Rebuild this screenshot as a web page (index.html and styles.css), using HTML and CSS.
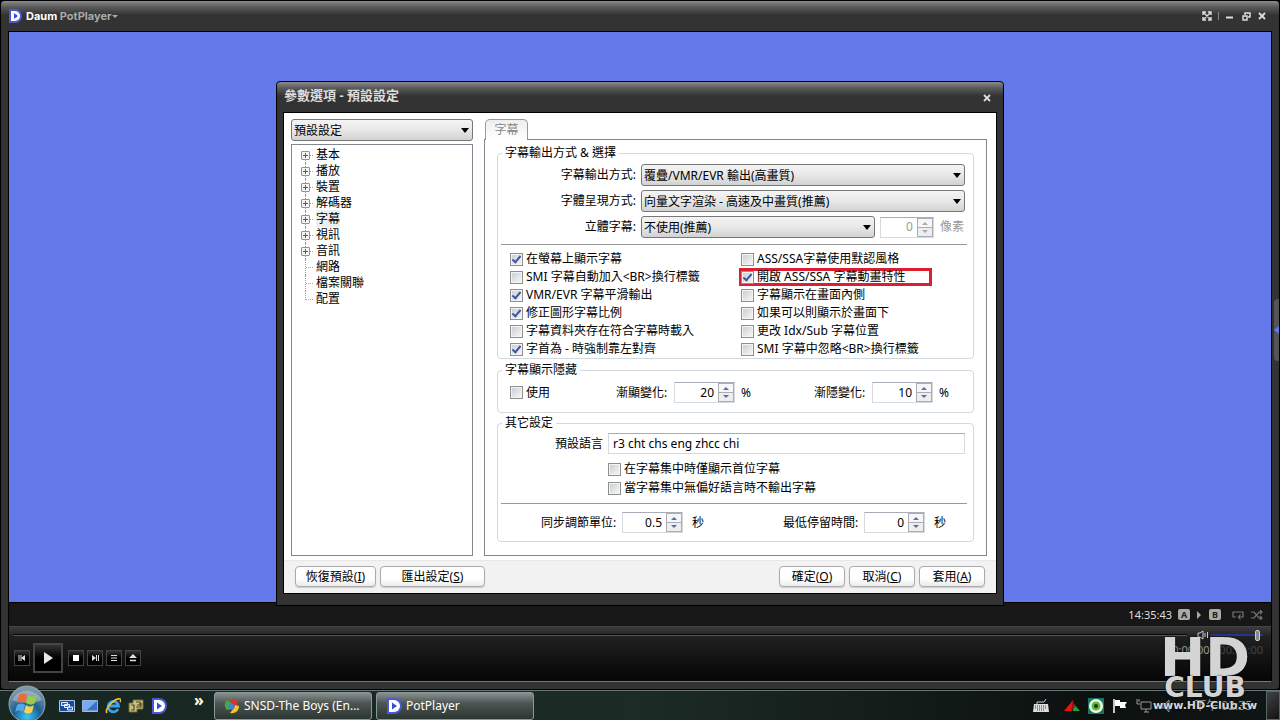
FILE: index.html
```
<!DOCTYPE html>
<html lang="zh-Hant">
<head>
    <meta charset="UTF-8">
    <meta name="viewport" content="width=device-width, initial-scale=1.0">
    <title>Daum PotPlayer</title>
    <link rel="stylesheet" href="styles.css">
</head>
<body>
    <main class="player">
        <header class="titlebar">
            <svg class="logo" viewBox="0 0 14 14"><path d="M1 0h6a7 7 0 0 1 0 14H1z" fill="#4a58d8"/><path d="M3 2h4a5 5 0 0 1 0 10H3z" fill="#fff"/><path d="M6 4l4 3-4 3z" fill="#3c4bd0"/></svg>
            <h1>Daum <span>PotPlayer</span></h1>
            <i class="caret"></i>
            <div class="window-buttons">
                <button aria-label="Fullscreen"><svg width="10" height="10" viewBox="0 0 10 10"><path d="M1 4V1h3M6 1h3v3M9 6v3H6M4 9H1V6M1 1l8 8M9 1L1 9" fill="none" stroke="#ddd" stroke-width="1.4"/></svg></button>
                <i class="divider"></i>
                <button aria-label="Minimize"><svg width="10" height="10" viewBox="0 0 10 10"><path d="M1 6.500h7" stroke="#ddd" stroke-width="2"/></svg></button>
                <button aria-label="Restore"><svg width="10" height="10" viewBox="0 0 10 10"><path d="M4 4V2h5v4H7M2 5h4v4H2z" fill="none" stroke="#ddd" stroke-width="1.500"/></svg></button>
                <button aria-label="Close"><svg width="10" height="10" viewBox="0 0 10 10"><path d="M2 2l6 6M8 2L2 8" stroke="#ddd" stroke-width="1.800"/></svg></button>
            </div>
        </header>

        <div class="screen">
            <div class="video"></div>
            <div class="status">
                <span class="clock">14:35:43</span>
                <b class="ab">A</b>
                <svg width="5" height="8" viewBox="0 0 5 8"><path d="M0 0l4 4-4 4z" fill="#aaa"/></svg>
                <b class="ab">B</b>
                <svg class="loop" width="12" height="10" viewBox="0 0 12 10"><path d="M4 7H1V2h10v5H7M8.500 4.500L6.500 7l2 2.500" fill="none" stroke="#777" stroke-width="1.200"/></svg>
                <svg width="12" height="10" viewBox="0 0 12 10"><path d="M0 2h3l5 6h3M0 8h3l5-6h3M9 0l2 2-2 2M9 6l2 2-2 2" fill="none" stroke="#777" stroke-width="1.200"/></svg>
            </div>
            <div class="controls">
                <div class="seek">
                    <div class="seek-line"></div>
                    <svg width="12" height="10" viewBox="0 0 12 10"><path d="M1 3h2l3-2v8L3 7H1z" fill="#222" stroke="#ccc"/><path d="M8 3v4M10.500 2v6" stroke="#ccc"/></svg>
                    <input class="volume" type="range" value="94" aria-label="Volume">
                </div>
                <div class="buttons">
                    <button aria-label="Previous"><svg viewBox="0 0 8 8"><path d="M1 1v6M3 1v6" stroke="#ddd"/><path d="M7 1v6L3 4z" fill="#ddd"/></svg></button>
                    <button class="play" aria-label="Play"><svg viewBox="0 0 12 12"><path d="M2 0l9 6-9 6z" fill="#e8e8e8"/></svg></button>
                    <button aria-label="Stop"><svg viewBox="0 0 8 8"><path d="M1 1h6v6H1z" fill="#fff"/></svg></button>
                    <button aria-label="Next"><svg viewBox="0 0 8 8"><path d="M7.500 1v6M5.500 1v6" stroke="#ddd"/><path d="M1 1v6l4-3z" fill="#ddd"/></svg></button>
                    <button aria-label="Playlist"><svg viewBox="0 0 8 8"><path d="M1 1.500h6M1 4h6M1 6.500h6" stroke="#ddd"/></svg></button>
                    <button aria-label="Open"><svg viewBox="0 0 8 8"><path d="M4 0l4 4H0z" fill="#ddd"/><path d="M1 6.500h6" stroke="#ddd" stroke-width="1.500"/></svg></button>
                    <span class="time">00:00:00 / <span>00:00:00</span></span>
                </div>
            </div>
        </div>
        <button class="side-handle" aria-label="Playlist panel"></button>
    </main>

    <section class="dialog">
        <header class="dialog-title">
            <h2>參數選項 - 預設設定</h2>
            <button aria-label="Close"><svg width="8" height="8" viewBox="0 0 8 8"><path d="M1 1l6 6M7 1L1 7" stroke="#ddd" stroke-width="1.800"/></svg></button>
        </header>
        <div class="dialog-body">
            <div class="columns">
                <div class="sidebar">
                    <div class="select"><select aria-label="設定檔"><option>預設設定</option></select></div>
                    <ul class="tree">
                        <li class="parent">基本</li>
                        <li class="parent">播放</li>
                        <li class="parent">裝置</li>
                        <li class="parent">解碼器</li>
                        <li class="parent selected"><span>字幕</span></li>
                        <li class="parent">視訊</li>
                        <li class="parent">音訊</li>
                        <li>網路</li>
                        <li>檔案關聯</li>
                        <li>配置</li>
                    </ul>
                </div>

                <div class="content">
                    <button class="tab">字幕</button>
                    <div class="panel">
                        <fieldset class="output">
                            <legend>字幕輸出方式 &amp; 選擇</legend>
                            <div class="row">
                                <label for="output">字幕輸出方式:</label>
                                <div class="select"><select id="output"><option>覆疊/VMR/EVR 輸出(高畫質)</option></select></div>
                            </div>
                            <div class="row">
                                <label for="render">字體呈現方式:</label>
                                <div class="select"><select id="render"><option>向量文字渲染 - 高速及中畫質(推薦)</option></select></div>
                            </div>
                            <div class="row">
                                <label for="stereo">立體字幕:</label>
                                <div class="select"><select id="stereo"><option>不使用(推薦)</option></select></div>
                                <div class="spin small disabled"><input type="text" value="0" aria-label="像素" disabled><i></i></div>
                                <span class="unit disabled">像素</span>
                            </div>
                            <hr>
                            <div class="checks">
                                <label><input type="checkbox" checked>在螢幕上顯示字幕</label>
                                <label><input type="checkbox">ASS/SSA字幕使用默認風格</label>
                                <label><input type="checkbox">SMI 字幕自動加入&lt;BR&gt;換行標籤</label>
                                <label class="highlight"><input type="checkbox" checked>開啟 ASS/SSA 字幕動畫特性</label>
                                <label><input type="checkbox" checked>VMR/EVR 字幕平滑輸出</label>
                                <label><input type="checkbox">字幕顯示在畫面內側</label>
                                <label><input type="checkbox" checked>修正圖形字幕比例</label>
                                <label><input type="checkbox">如果可以則顯示於畫面下</label>
                                <label><input type="checkbox">字幕資料夾存在符合字幕時載入</label>
                                <label><input type="checkbox">更改 Idx/Sub 字幕位置</label>
                                <label><input type="checkbox" checked>字首為 - 時強制靠左對齊</label>
                                <label><input type="checkbox">SMI 字幕中忽略&lt;BR&gt;換行標籤</label>
                            </div>
                        </fieldset>

                        <fieldset class="fade">
                            <legend>字幕顯示隱藏</legend>
                            <div class="fade-row">
                                <label><input type="checkbox">使用</label>
                                <div class="field">
                                    <label for="fadein">漸顯變化:</label>
                                    <div class="spin"><input type="text" id="fadein" value="20"><i></i></div>
                                    <span class="unit">%</span>
                                </div>
                                <div class="field">
                                    <label for="fadeout">漸隱變化:</label>
                                    <div class="spin"><input type="text" id="fadeout" value="10"><i></i></div>
                                    <span class="unit">%</span>
                                </div>
                            </div>
                        </fieldset>

                        <fieldset class="other">
                            <legend>其它設定</legend>
                            <div class="row">
                                <label for="lang">預設語言</label>
                                <input class="text" type="text" id="lang" value="r3 cht chs eng zhcc chi">
                            </div>
                            <div class="language-checks">
                                <label><input type="checkbox">在字幕集中時僅顯示首位字幕</label>
                                <label><input type="checkbox">當字幕集中無偏好語言時不輸出字幕</label>
                            </div>
                            <hr>
                            <div class="timing">
                                <div class="field">
                                    <label for="sync">同步調節單位:</label>
                                    <div class="spin"><input type="text" id="sync" value="0.5"><i></i></div>
                                    <span class="unit">秒</span>
                                </div>
                                <div class="field">
                                    <label for="stay">最低停留時間:</label>
                                    <div class="spin"><input type="text" id="stay" value="0"><i></i></div>
                                    <span class="unit">秒</span>
                                </div>
                            </div>
                        </fieldset>
                    </div>
                </div>
            </div>
            <footer class="actions">
                <button>恢復預設(<u>I</u>)</button>
                <button class="export">匯出設定(<u>S</u>)</button>
                <button class="ok">確定(<u>O</u>)</button>
                <button>取消(<u>C</u>)</button>
                <button>套用(<u>A</u>)</button>
            </footer>
        </div>
    </section>

    <footer class="taskbar">
        <button class="start" aria-label="Start">
            <svg width="38" height="38" viewBox="0 0 38 38">
                <defs>
                    <radialGradient id="orb" cx="50%" cy="85%" r="75%"><stop offset="0" stop-color="#3cc8f4"/><stop offset=".5" stop-color="#1d5f92"/><stop offset="1" stop-color="#7d98a8"/></radialGradient>
                </defs>
                <circle cx="19" cy="19" r="18" fill="url(#orb)" stroke="#93a9b2"/>
                <path d="M4 15a16 14 0 0 1 30 0c-8 4-22 4-30 0z" fill="#d5e2e8" opacity=".4"/>
                <path d="M11 10c3-2 5-2 8 0l-2 8c-3-2-5-2-8 0z" fill="#ee6a35"/>
                <path d="M20 10c3 2 5 2 9 0l-2 8c-3 2-5 2-9 0z" fill="#9bcb4a"/>
                <path d="M9 20c3-2 5-2 8 0l-2 7c-3-2-5-2-8 0z" fill="#55a8e8"/>
                <path d="M18 20c3 2 5 2 8 0l-2 7c-3 2-5 2-8 0z" fill="#fbd24d"/>
            </svg>
        </button>
        <div class="quick">
            <a href="#" aria-label="Switch windows"><svg viewBox="0 0 16 16"><path d="M.5 2.500h15v11H.5z" fill="#1c4a9a" stroke="#a9c6ea"/><path d="M2.500 4.500h6v3h-6zM5.500 6.500h5v3h-5zM8.500 9h5v3h-5z" fill="#2d62b4" stroke="#e8f2ff"/></svg></a>
            <a href="#" aria-label="Show desktop"><svg viewBox="0 0 16 16"><path d="M.5 2.500h15v11H.5z" fill="#3472cc" stroke="#8fb5e0"/><path d="M1 3h14L5 12H1z" fill="#79aaf0"/><path d="M1 13h14" stroke="#bbd" /></svg></a>
            <a href="#" aria-label="Internet Explorer"><svg viewBox="0 0 16 16"><path d="M13 11a5.200 5.200 0 1 1 .5-3H5" fill="none" stroke="#3aa3e8" stroke-width="2.800"/><path d="M2 15C-1 11 10 0 15 1c1 0 1 2 0 3" fill="none" stroke="#f3bd35" stroke-width="1.600"/></svg></a>
            <a href="#" aria-label="Tools"><svg viewBox="0 0 16 16"><path d="M5 2h10v9H9v3H1V5h4z" fill="#c8c184" stroke="#6e6a35"/><path d="M3 7h3v5H3M8 4h4v3H9M8 9h5V5" fill="none" stroke="#4d4a25" stroke-width="1.200"/></svg></a>
            <a href="#" aria-label="PotPlayer"><svg viewBox="0 0 16 16"><path d="M1 0h7a8 8 0 0 1 0 16H1z" fill="#4858d8"/><path d="M3 2h5a6 6 0 0 1 0 12H3z" fill="#fff"/><path d="M6 4.500l5 3.500-5 3.500z" fill="#3c4bd0"/></svg></a>
        </div>
        <span class="more">»</span>
        <button class="task">
            <svg viewBox="0 0 16 16"><path d="M3 2l5 3v6L3 12C0 9 0 5 3 2z" fill="#45a64a"/><path d="M6 2c3-2 6-1 7 1v5L8 6z" fill="#d8362c"/><path d="M15 8c0 5-4 8-9 7l4-5 1-3z" fill="#f2c433"/><circle cx="7.500" cy="8.500" r="3" fill="#3d83d8"/></svg>
            SNSD-The Boys (En...
        </button>
        <button class="task">
            <svg viewBox="0 0 16 16"><path d="M1 0h7a8 8 0 0 1 0 16H1z" fill="#4858d8"/><path d="M3 2h5a6 6 0 0 1 0 12H3z" fill="#fff"/><path d="M6 4.500l5 3.500-5 3.500z" fill="#3c4bd0"/></svg>
            PotPlayer
        </button>
        <div class="tray">
            <svg class="keyboard" viewBox="0 0 16 16"><path d="M1 6h14l1 8H0z" fill="#ddd"/><path d="M2 8h12M2 10h12M4 12h8" stroke="#444" stroke-dasharray="1 1"/><path d="M4 6V4h7l2-3" fill="none" stroke="#ccc"/></svg>
            <svg viewBox="0 0 16 16"><path d="M9 2L0 13h8z" fill="#e31313"/><path d="M9 5v8h7z" fill="#20a62c"/><path d="M9 2L7 13l4-4z" fill="#911"/></svg>
            <svg viewBox="0 0 16 16"><path d="M0 0h16v16H0z" fill="#16775b"/><circle cx="8" cy="8" r="7" fill="#f2f8ec"/><circle cx="8" cy="8" r="4.500" fill="#62b638"/><circle cx="8" cy="8" r="2" fill="#153b12"/></svg>
            <svg viewBox="0 0 16 16"><path d="M2 1v14" stroke="#fff" stroke-width="1.500"/><path d="M3 2h5v2h7l-2 3 1 3H8V8H3z" fill="#fff"/></svg>
            <svg viewBox="0 0 16 16"><path d="M5 4h10v7H5zM8 14h5M10 11v3M1 1v5h3M3 1v3" fill="none" stroke="#999"/></svg>
            <svg viewBox="0 0 16 16"><path d="M2 6h3l4-4v12l-4-4H2zM11 5v6" fill="#555" stroke="#888"/></svg>
            <span class="tray-time">下午 02:35</span>
        </div>
        <button class="show-desktop" aria-label="Show desktop"></button>
    </footer>

    <div class="watermark">
        <strong>HD</strong>
        <b>CLUB</b>
        <span>www.HD-Club.tw</span>
    </div>
</body>
</html>
```
FILE: styles.css
```
*,
*::before,
*::after {
    box-sizing: border-box;
}
body {
    margin: 0;
    min-height: 100vh;
    display: flex;
    flex-direction: column;
    position: relative;
    overflow: hidden;
    background: #000;
    font-family: "Noto Sans", "Noto Sans CJK TC", sans-serif;
    font-size: 12px;
    line-height: 16px;
    color: #000;
}
button, input, select {
    font: inherit;
    color: inherit;
    margin: 0;
}
button {
    padding: 0;
    border: 0;
    background: none;
}
svg {
    display: block;
    flex: none;
}

/* player window */
.player {
    flex: 1;
    display: flex;
    flex-direction: column;
    position: relative;
    padding: 0 7px 7px;
    border: 1px solid #000;
    border-radius: 4px;
    background: linear-gradient(#8c8a8c, #5a5a5a 6px, #333 14px);
}
.titlebar {
    display: flex;
    align-items: center;
    height: 30px;
    color: #fff;
}
.logo {
    width: 14px;
    height: 14px;
}
.titlebar h1 {
    margin: 0 0 0 4px;
    font: bold 11px/16px Inter, "Liberation Sans", sans-serif;
}
.titlebar h1 span {
    color: #aaa;
}
.caret {
    margin-left: 1px;
    border: 3px solid transparent;
    border-top-color: #aaa;
    border-bottom: 0;
}
.window-buttons {
    display: flex;
    align-items: center;
    gap: 6px;
    margin-left: auto;
    padding-right: 5px;
}
.divider {
    width: 1px;
    height: 8px;
    background: #888;
}
.screen {
    flex: 1;
    display: flex;
    flex-direction: column;
    border: 1px solid #000;
    border-bottom-color: #777;
}
.video {
    flex: 1;
    background: #647aeb;
}
.status {
    display: flex;
    align-items: center;
    justify-content: flex-end;
    gap: 7px;
    height: 24px;
    padding-right: 8px;
    border-top: 1px solid #000;
    background: #171717;
    color: #ddd;
    font-size: 11px;
}
.clock {
    margin-right: -1px;
}
.ab {
    width: 12px;
    height: 11px;
    border-radius: 2px;
    background: #aaa;
    color: #222;
    font-size: 9px;
    line-height: 11px;
    text-align: center;
}
.loop {
    margin-left: 4px;
}
.controls {
    height: 55px;
    padding: 2px 8px 0 5px;
    border-top: 1px solid #444;
    background: linear-gradient(#3c3c3c, #202020 10px, #050505);
}
.seek {
    display: flex;
    align-items: center;
    gap: 2px;
    height: 12px;
}
.seek-line {
    flex: 1;
    height: 2px;
    margin-right: 8px;
    background: #080808;
    border-bottom: 1px solid #555;
}
.volume {
    appearance: none;
    width: 52px;
    height: 12px;
    background: linear-gradient(#28348c, #28348c) center / 100% 2px no-repeat;
}
.volume::-webkit-slider-thumb {
    appearance: none;
    width: 5px;
    height: 11px;
    border: 1px solid #ccc;
    border-radius: 2px;
    background: #888;
}
.buttons {
    display: flex;
    align-items: center;
    gap: 3px;
    height: 34px;
}
.buttons button {
    display: flex;
    align-items: center;
    justify-content: center;
    width: 16px;
    height: 16px;
    border: 1px solid #444;
    background: linear-gradient(#333, #000 50%);
}
.buttons svg {
    width: 8px;
    height: 8px;
}
.buttons .play {
    width: 30px;
    height: 30px;
    margin-right: 2px;
    border: 2px solid #444;
}
.buttons .play svg {
    width: 12px;
    height: 12px;
}
.time {
    margin: 0 0 16px auto;
    color: #999;
    font-size: 11px;
}
.time span {
    color: #444;
}
.side-handle {
    position: absolute;
    right: 0;
    top: 50%;
    width: 5px;
    height: 62px;
    margin-top: -46px;
    border-radius: 4px 0 0 4px;
    background: #555;
}
.side-handle::after {
    content: "";
    display: block;
    border: 4px solid transparent;
    border-right: 5px solid #6478f0;
    border-left: 0;
}

/* settings dialog */
.dialog {
    position: absolute;
    top: 81px;
    left: 50%;
    width: 728px;
    margin-left: -364px;
    padding: 0 6px 11px;
    border: 1px solid #000;
    border-radius: 4px 4px 0 0;
    background: linear-gradient(#8c8a8c, #5a5a5a 6px, #333 14px);
}
.dialog-title {
    display: flex;
    align-items: center;
    justify-content: space-between;
    height: 30px;
    padding: 0 6px 4px 1px;
    color: #ddd;
}
.dialog-title h2 {
    margin: 0;
    font-size: 13px;
    line-height: 16px;
}
.dialog-title button {
    margin-top: 6px;
}
.dialog-body {
    border: 1px solid #000;
    background: #fff;
}
.columns {
    display: flex;
    gap: 11px;
    padding: 6px 9px 4px 7px;
}
.sidebar {
    display: flex;
    flex-direction: column;
    gap: 3px;
    width: 182px;
}
.content {
    flex: 1;
}
.select {
    flex: 1;
    position: relative;
}
.sidebar .select {
    flex: none;
}
.select::after {
    content: "";
    position: absolute;
    right: 4px;
    top: 9px;
    border: 4px solid transparent;
    border-top: 5px solid #000;
    border-bottom: 0;
    pointer-events: none;
}
.select select {
    appearance: none;
    display: block;
    width: 100%;
    height: 22px;
    padding: 1px 2px 0;
    border: 1px solid #777;
    border-radius: 3px;
    background: linear-gradient(#f4f4f4, #e8e8e8 50%, #d2d2d2);
}
.tree {
    flex: 1;
    margin: 0;
    padding: 2px 0 0 9px;
    border: 1px solid #828790;
    list-style: none;
}
.tree li {
    position: relative;
    height: 16px;
    padding-left: 15px;
}
.tree li::before {
    content: "";
    position: absolute;
    left: 4px;
    top: 0;
    width: 9px;
    height: 16px;
    border-left: 1px dotted #999;
    background: repeating-linear-gradient(90deg, #aaa 0 1px, transparent 1px 2px) 0 8px / 100% 1px no-repeat;
}
.tree li:first-child::before {
    top: 8px;
    height: 8px;
    background-position: 0 0;
}
.tree li:last-child::before {
    height: 9px;
}
.tree .parent::after {
    content: "";
    position: absolute;
    left: 0;
    top: 4px;
    width: 9px;
    height: 9px;
    border: 1px solid #8d97a4;
    border-radius: 1px;
    background:
        linear-gradient(#36609c, #36609c) center / 5px 1px no-repeat,
        linear-gradient(#36609c, #36609c) center / 1px 5px no-repeat,
        #f4f4f4;
}
.tree .selected span {
    background: #eee;
}
.tab {
    display: block;
    position: relative;
    width: 43px;
    height: 20px;
    margin-left: 1px;
    border: 1px solid #999;
    border-bottom: 0;
    border-radius: 5px 5px 0 0;
    background: linear-gradient(#eee, #fff);
    color: #888;
}
.tab::after {
    content: "";
    position: absolute;
    left: 0;
    right: 0;
    bottom: -1px;
    height: 1px;
    background: #fff;
}
.panel {
    padding: 5px 12px 13px;
    border: 1px solid #828790;
}
fieldset {
    min-width: 0;
    margin: 0;
    padding: 0 6px 0 3px;
    border: 1px solid #d0d9e0;
    border-radius: 4px;
}
legend {
    height: 16px;
    margin-left: 1px;
    padding: 0 3px;
}
.row {
    display: flex;
    align-items: center;
    gap: 5px;
    padding-right: 2px;
}
.row > label {
    width: 135px;
    text-align: right;
}
.output {
    padding-bottom: 3px;
}
.output .row {
    margin-top: 4px;
}
.output legend + .row {
    margin-top: 3px;
}
hr {
    height: 1px;
    margin: 6px 0 0;
    border: 0;
    background: #999;
}
.disabled {
    color: #999;
}
.spin {
    display: flex;
    width: 61px;
    height: 21px;
    border: 1px solid #d5dae0;
    border-top-color: #aaadb5;
}
.spin.small {
    width: 54px;
}
.spin input {
    width: 0;
    flex: 1;
    padding: 0 4px 0 0;
    border: 0;
    background: none;
    text-align: right;
}
.spin i {
    position: relative;
    width: 16px;
    border: 1px solid #aaadb5;
    background: linear-gradient(#f6f6f8 8px, #aaadb5 8px 9px, #eee 9px);
}
.spin i::before,
.spin i::after {
    content: "";
    position: absolute;
    left: 4px;
    border: 3px solid transparent;
}
.spin i::before {
    top: 3px;
    border-top: 0;
    border-bottom-color: #5b6bb4;
}
.spin i::after {
    bottom: 3px;
    border-bottom: 0;
    border-top-color: #5b6bb4;
}
.spin.disabled i::before {
    border-bottom-color: #aaa;
}
.spin.disabled i::after {
    border-top-color: #aaa;
}
.unit {
    padding: 0 1px;
}
input[type="checkbox"] {
    appearance: none;
    flex: none;
    display: block;
    position: relative;
    width: 13px;
    height: 13px;
    border: 1px solid #8e8f8f;
    background: linear-gradient(135deg, #c8ccd0, #f8f8f8);
    box-shadow: inset 0 0 0 1px #f4f4f4;
}
input[type="checkbox"]:checked::after {
    content: "";
    position: absolute;
    left: 3px;
    top: 0;
    width: 5px;
    height: 9px;
    border: solid #3f56a4;
    border-width: 0 2px 2px 0;
    transform: rotate(40deg);
}
.checks {
    display: grid;
    grid-template-columns: 231px 1fr;
    grid-auto-rows: 1fr;
    height: 105px;
    margin-top: 5px;
    padding-left: 9px;
}
.checks label,
.fade-row > label,
.language-checks label {
    display: flex;
    align-items: center;
    gap: 3px;
    line-height: 18px;
    white-space: nowrap;
}
.highlight {
    position: relative;
    z-index: 0;
}
/* frame sits behind the label text */
.highlight::after {
    content: "";
    position: absolute;
    z-index: -1;
    left: -2px;
    top: 0;
    width: 193px;
    height: 18px;
    border: 3px solid #dc1e32;
}
.fade {
    margin-top: 3px;
}
.other {
    margin-top: 2px;
}
.fade-row {
    display: grid;
    grid-template-columns: 106px 198px 1fr;
    align-items: center;
    padding: 4px 0 9px 9px;
}
.field {
    display: flex;
    align-items: center;
    gap: 5px;
}
.fade .field label {
    width: 53px;
}
.timing .field label {
    width: 76px;
}
.other .row > label {
    width: 102px;
}
.other .row {
    padding-top: 2px;
}
.text {
    flex: 1;
    height: 21px;
    padding: 0 4px;
    border: 1px solid #d5dae0;
    border-top-color: #aaadb5;
}
.language-checks {
    display: flex;
    flex-direction: column;
    gap: 1px;
    padding: 6px 0 0 107px;
}
.other hr {
    margin-top: 6px;
}
.timing {
    display: grid;
    grid-template-columns: 242px 1fr;
    padding: 8px 0 8px 40px;
}
.timing .unit {
    padding-left: 4px;
}
.actions {
    display: flex;
    gap: 4px;
    padding: 5px 11px 6px;
    border-top: 1px solid #e8e8e8;
    background: #f2f2f2;
}
.actions button {
    width: 66px;
    height: 21px;
    border: 1px solid #aaa;
    border-radius: 4px;
    background: linear-gradient(#fff 60%, #ececec);
    box-shadow: 0 1px 1px #ccc;
}
.actions button:first-child {
    width: 81px;
}
.actions .export {
    width: 105px;
}
.actions .ok {
    margin-left: auto;
}

/* taskbar */
.taskbar {
    display: flex;
    align-items: center;
    height: 30px;
    border-top: 1px solid #677;
    background: linear-gradient(90deg, #172620, #1c2b25 50%, #0c1110 85%, #101615);
    color: #fff;
}
.start {
    position: relative;
    width: 38px;
    margin: -4px 13px 0 8px;
}
.quick {
    display: flex;
    gap: 7px;
}
.quick svg,
.task svg,
.tray svg {
    width: 16px;
    height: 16px;
}
.more {
    width: 20px;
    margin: -12px 0 0 27px;
    font-size: 16px;
    font-weight: bold;
}
.task {
    display: flex;
    align-items: center;
    gap: 4px;
    width: 158px;
    height: 28px;
    margin-right: 4px;
    padding: 0 9px;
    border: 1px solid #899;
    border-radius: 3px;
    background: linear-gradient(#8a908e, #4c5552 40%, #2b3531);
    white-space: nowrap;
}
.tray {
    display: flex;
    align-items: center;
    gap: 8px;
    margin-left: auto;
    padding-right: 14px;
    color: #999;
}
.tray .keyboard {
    margin-right: 7px;
}
.tray-time {
    margin-left: 10px;
}
.show-desktop {
    width: 14px;
    height: 29px;
    border: 1px solid #566;
    background: linear-gradient(135deg, #444, #111);
}

.watermark {
    position: absolute;
    right: 18px;
    bottom: 6px;
    width: 114px;
    display: flex;
    flex-direction: column;
    align-items: center;
    color: #d4d4d4;
    font-family: "DejaVu Sans", sans-serif;
    text-shadow: 0 0 2px #000;
    pointer-events: none;
}
.watermark strong {
    font-size: 54px;
    line-height: 40px;
}
.watermark b {
    font-size: 28px;
    line-height: 20px;
}
.watermark span {
    font-size: 11px;
    font-weight: bold;
}
```
